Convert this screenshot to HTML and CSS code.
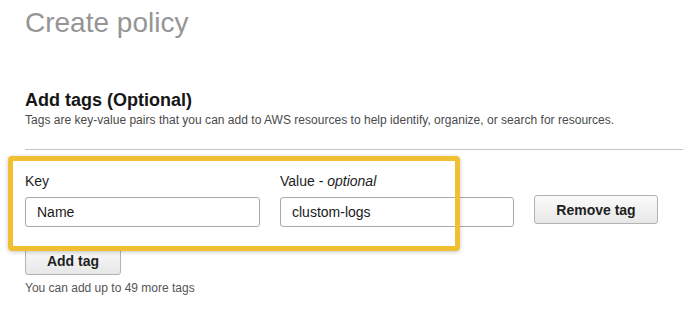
FILE: index.html
```html
<!DOCTYPE html>
<html>
<head>
<meta charset="utf-8">
<link rel="stylesheet" href="styles.css">
</head>
<body>
<div class="page">
  <h1 class="title">Create policy</h1>
  <section class="tags-header">
    <h2 class="heading">Add tags (Optional)</h2>
    <p class="desc">Tags are key-value pairs that you can add to AWS resources to help identify, organize, or search for resources.</p>
  </section>
  <div class="tag-grid">
    <label class="label">Key</label>
    <label class="label">Value - <em>optional</em></label>
    <span></span>
    <input class="field" type="text" value="Name">
    <input class="field" type="text" value="clustom-logs">
    <button class="btn btn-remove">Remove tag</button>
  </div>
  <button class="btn btn-add">Add tag</button>
  <p class="hint">You can add up to 49 more tags</p>
  <div class="highlight"></div>
</div>
</body>
</html>
```
FILE: styles.css
```css
* { box-sizing: border-box; }
html, body { margin: 0; padding: 0; background: #fff; }
body { font-family: "Liberation Sans", Arial, sans-serif; }
.page {
  position: relative;
  padding: 0 13px 0 25px;
  width: 696px;
  height: 327px;
}
.title {
  margin: 0;
  padding-top: 7px;
  font-size: 28px;
  line-height: 32px;
  font-weight: normal;
  color: #959595;
}
.tags-header {
  margin-top: 51px;
  padding-bottom: 22px;
  border-bottom: 1px solid #c6c6c6;
}
.heading {
  margin: 0;
  font-size: 18px;
  line-height: 20px;
  font-weight: bold;
  color: #161616;
}
.desc {
  margin: 3px 0 0;
  font-size: 12px;
  line-height: 14px;
  color: #4a4a4a;
  letter-spacing: 0.02px;
}
.tag-grid {
  display: grid;
  grid-template-columns: 235px 234px auto;
  column-gap: 20px;
  row-gap: 8px;
  margin-top: 23px;
  align-items: start;
  justify-items: start;
}
.label {
  font-size: 14px;
  line-height: 16px;
  color: #1e1e1e;
}
.label em { font-style: italic; }
.field {
  width: 100%;
  height: 30px;
  margin: 0;
  padding: 0 11px;
  border: 1px solid #a9a9a9;
  border-radius: 3px;
  font-family: "Liberation Sans", Arial, sans-serif;
  font-size: 14px;
  color: #1a1a1a;
  background: #fff;
}
.btn {
  height: 29px;
  margin: 0;
  border: 1px solid #b3b3b3;
  border-radius: 3px;
  background: linear-gradient(#fbfbfb, #e7e7e7);
  font-family: "Liberation Sans", Arial, sans-serif;
  font-size: 14px;
  font-weight: bold;
  color: #1f1f1f;
  padding: 0;
}
.btn-remove {
  width: 124px;
  margin-top: -2px;
}
.btn-add {
  display: block;
  width: 96px;
  margin-top: 19px;
}
.hint {
  margin: 6px 0 0;
  font-size: 12px;
  line-height: 14px;
  color: #555;
}
.highlight {
  position: absolute;
  left: 8px;
  top: 156px;
  width: 452px;
  height: 95px;
  border: 5px solid #f1bf32;
  border-radius: 4px;
  box-shadow: 0 1px 4px rgba(0, 0, 0, 0.22);
  pointer-events: none;
}
```
